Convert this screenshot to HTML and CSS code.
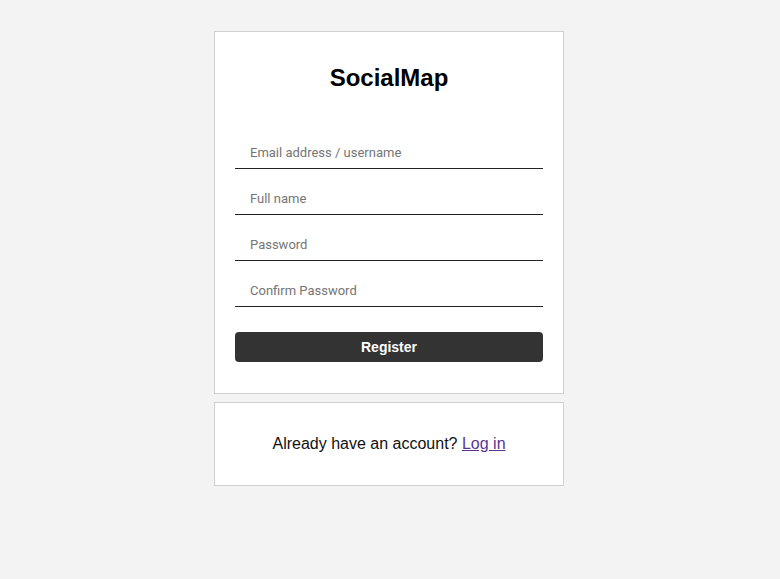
FILE: index.html
```html
<!DOCTYPE html>
<html>
<head>
<meta charset="utf-8">
<link rel="stylesheet" href="styles.css">
</head>
<body>
<div class="page">
  <div class="card main">
    <h1 class="title">SocialMap</h1>
    <form class="form">
      <input class="field" type="text" placeholder="Email address / username">
      <input class="field" type="text" placeholder="Full name">
      <input class="field" type="password" placeholder="Password">
      <input class="field" type="password" placeholder="Confirm Password">
      <button class="btn" type="button">Register</button>
    </form>
  </div>
  <div class="card foot">
    <p class="foot-text">Already have an account? <a class="link" href="#">Log in</a></p>
  </div>
</div>
</body>
</html>
```
FILE: styles.css
```css
html, body {
  margin: 0;
  padding: 0;
  background: #f3f3f3;
  font-family: "Liberation Sans", Arial, sans-serif;
}
.page {
  display: flex;
  flex-direction: column;
  align-items: center;
  padding-top: 31px;
  padding-right: 2px;
  gap: 8px;
}
.card {
  width: 348px;
  background: #fff;
  border: 1px solid #d0d0d0;
  box-sizing: content-box;
}
.main {
  padding: 20px;
  width: 308px;
}
.title {
  margin: 12px 0 0;
  font-size: 24px;
  line-height: 28px;
  font-weight: bold;
  text-align: center;
  color: #000;
}
.form {
  display: flex;
  flex-direction: column;
  margin: 31px 0 0;
}
.field {
  display: block;
  box-sizing: border-box;
  width: 100%;
  height: 33px;
  margin: 13px 0 0;
  padding: 0 15px;
  border: none;
  border-bottom: 1px solid #222;
  outline: none;
  font-family: Roboto, "Liberation Sans", sans-serif;
  font-size: 13px;
  color: #333;
  background: transparent;
}
.field::placeholder {
  color: #757575;
}
.btn {
  margin: 25px 0 11px;
  height: 30px;
  border: none;
  border-radius: 4px;
  background: #333;
  color: #fff;
  font-family: "Liberation Sans", Arial, sans-serif;
  font-size: 14px;
  font-weight: bold;
}
.foot {
  padding: 32px 0;
}
.foot-text {
  margin: 0;
  text-align: center;
  font-size: 16px;
  line-height: 18px;
  color: #111;
}
.link {
  color: #5a3590;
}
```
